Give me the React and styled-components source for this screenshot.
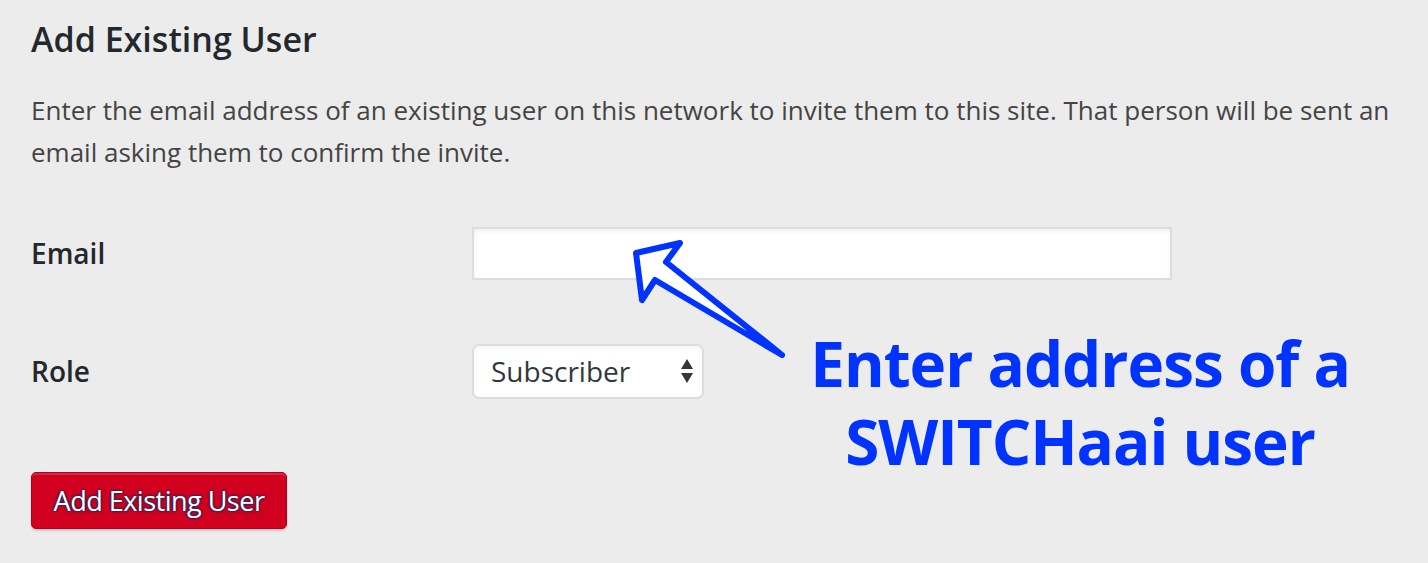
import React from 'react';
import styled, { createGlobalStyle } from 'styled-components';

const GlobalStyle = createGlobalStyle`
  html, body {
    margin: 0;
    padding: 0;
    background: #ececec;
  }
  body {
    font-family: "Open Sans", "Noto Sans", sans-serif;
    color: #444;
  }
`

const Page = styled.div`
  position: relative;
  width: 1428px;
  height: 563px;
  padding: 16px 31px 0;
  box-sizing: border-box;
  overflow: hidden;
`

const Heading = styled.h3`
  margin: 0;
  font-size: 34px;
  line-height: 46px;
  font-weight: 600;
  color: #23282d;
`

const Intro = styled.p`
  margin: 27px 0 0;
  font-size: 26px;
  line-height: 42px;
  color: #444;
  max-width: 1380px;
`

const FormGrid = styled.div`
  display: grid;
  grid-template-columns: 441px 700px;
  grid-auto-rows: 118px;
  align-items: center;
  margin-top: 21px;
`

const Label = styled.label`
  font-size: 28px;
  font-weight: 600;
  color: #23282d;
`

const TextInput = styled.input`
  box-sizing: border-box;
  width: 700px;
  height: 53px;
  border: 2px solid #dddddd;
  background: #fff;
  box-shadow: inset 0 2px 4px rgba(0, 0, 0, 0.07);
  outline: none;
  font: inherit;
`

const SelectBox = styled.div`
  box-sizing: border-box;
  width: 232px;
  height: 55px;
  display: flex;
  align-items: center;
  justify-content: space-between;
  padding: 0 8px 0 17px;
  border: 2px solid #dddddd;
  border-radius: 7px;
  background: #fff;
  box-shadow: inset 0 2px 4px rgba(0, 0, 0, 0.05);
  font-size: 28px;
  color: #32373c;
`

const SubmitButton = styled.button`
  display: block;
  margin-top: 42px;
  box-sizing: border-box;
  width: 256px;
  height: 57px;
  border: 1px solid #b0001a;
  border-radius: 5px;
  background: #d2001f;
  box-shadow: 0 2px 2px rgba(0, 0, 0, 0.15), inset 0 2px 0 rgba(255, 255, 255, 0.15);
  font-family: "Open Sans", sans-serif;
  font-size: 27px;
  font-weight: 400;
  letter-spacing: -0.5px;
  color: #fff;
  text-shadow: 0 0 2px #0b2c5e, 0 0 2px #0b2c5e, 0 0 3px #0b2c5e;
  padding: 0;
`

const Annotation = styled.div`
  position: absolute;
  left: 780px;
  top: 324px;
  width: 600px;
  text-align: center;
  font-family: "Open Sans", "Noto Sans", sans-serif;
  font-weight: 700;
  font-size: 62px;
  line-height: 78px;
  color: #0033ff;
  letter-spacing: -1px;
`

const ArrowSvg = styled.svg`
  position: absolute;
  left: 0;
  top: 0;
  pointer-events: none;
`

function SortArrows() {
  return (
    <svg width="14" height="26" viewBox="0 0 14 26">
      <path d="M7 1 L13 11 L1 11 Z" fill="#32373c" />
      <path d="M1 15 L13 15 L7 25 Z" fill="#32373c" />
    </svg>
  )
}

export default function App() {
  return (
    <>
      <GlobalStyle />
      <Page>
        <Heading>Add Existing User</Heading>
        <Intro>
          Enter the email address of an existing user on this network to invite them to this site. That person will be sent an email asking them to confirm the invite.
        </Intro>
        <FormGrid>
          <Label htmlFor="email">Email</Label>
          <TextInput id="email" type="text" />
          <Label>Role</Label>
          <SelectBox>
            <span>Subscriber</span>
            <SortArrows />
          </SelectBox>
        </FormGrid>
        <SubmitButton>Add Existing User</SubmitButton>

        <ArrowSvg width="1428" height="563" viewBox="0 0 1428 563">
          <polygon
            points="636,253 680,243 666,262 782,355 655,280 642,300"
            fill="#fff"
            stroke="#0033ff"
            strokeWidth="6"
            strokeLinejoin="round"
          />
        </ArrowSvg>
        <Annotation>
          Enter address of a<br />SWITCHaai user
        </Annotation>
      </Page>
    </>
  );
}
